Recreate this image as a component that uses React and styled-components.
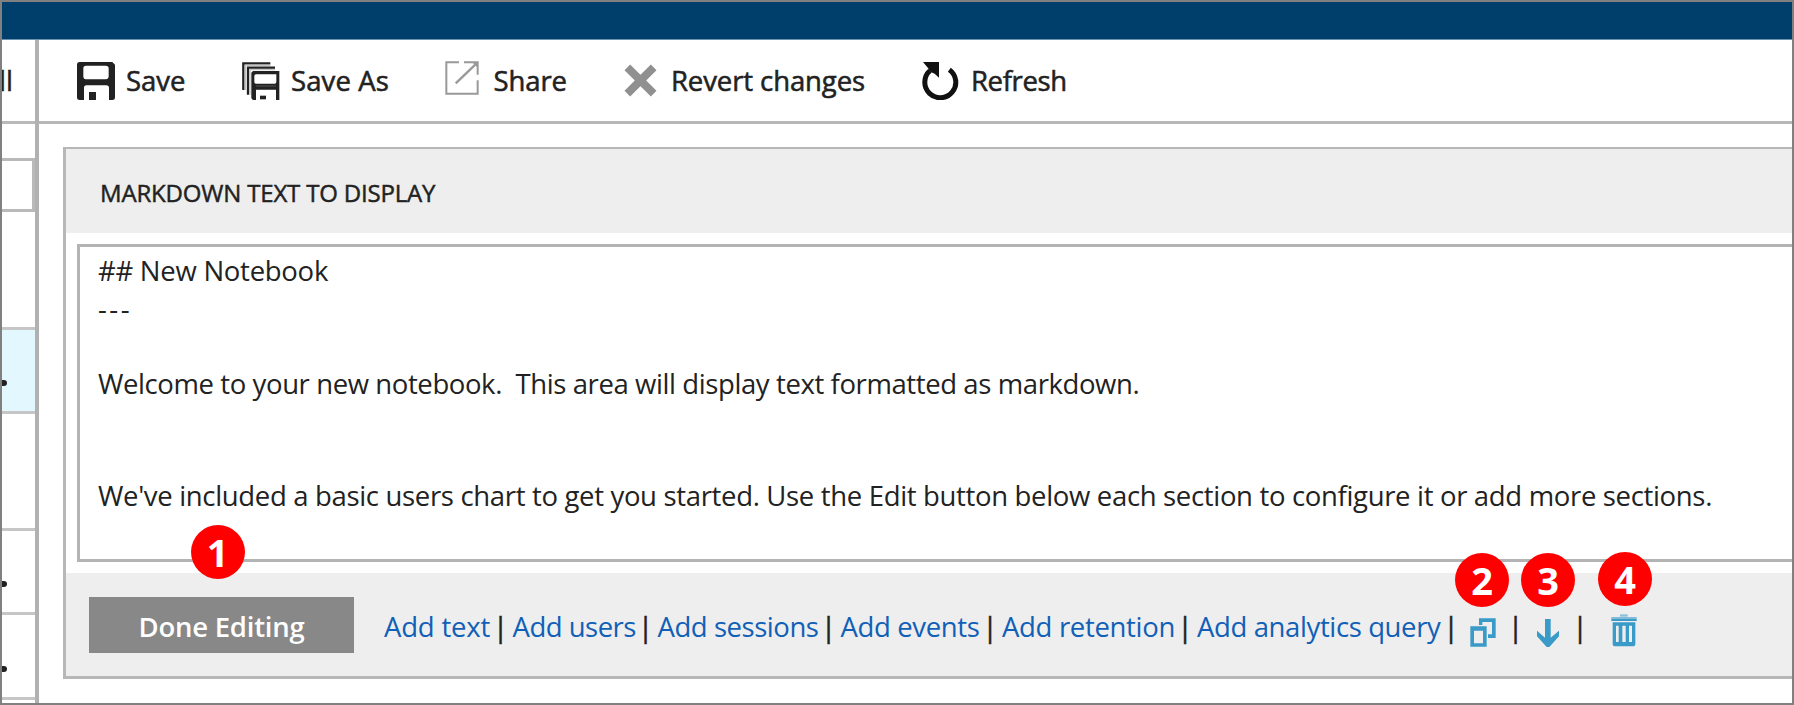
import React from 'react';
import styled, { createGlobalStyle } from 'styled-components';

const GlobalStyle = createGlobalStyle`
  *, *::before, *::after { box-sizing: border-box; }
  body { margin: 0; background: #fff; }
`;

const Frame = styled.div`
  width: 1794px;
  height: 705px;
  border: 2px solid #808080;
  background: #fff;
  color: #222;
  font-family: "Open Sans", "Noto Sans", sans-serif;
  font-size: 27.5px;
  display: flex;
  flex-direction: column;
  overflow: hidden;
  position: relative;
`;

const TopBar = styled.header`
  flex: none;
  height: 38px;
  background: #003e6c;
  border-bottom: 1px solid #6b91af;
`;

const Body = styled.div`
  flex: 1;
  min-height: 0;
  display: flex;
`;

const Rail = styled.aside`
  flex: none;
  width: 37px;
  border-right: 4px solid #b1b1b1;
  display: flex;
  flex-direction: column;
  overflow: hidden;
`;

const RailHead = styled.div`
  flex: none;
  height: 84px;
  border-bottom: 3px solid #b9b9b9;
  padding-top: 21px;
  display: flex;
  justify-content: flex-end;
  padding-right: 22px;
  -webkit-text-stroke: 0.5px currentColor;
  line-height: 40px;
`;

const RailSearch = styled.div`
  flex: none;
  height: 54px;
  margin-top: 34px;
  border: solid #b9b9b9;
  border-width: 3px 3px 3px 0;
`;

const RailRow = styled.div`
  flex: none;
  height: ${(p) => p.$height}px;
  background: ${(p) => (p.$selected ? '#e3f7ff' : '#fff')};
  border-bottom: 3px solid #c6c6c6;
  display: flex;
  align-items: flex-end;
  padding-bottom: 25px;
`;

const Dot = styled.span`
  width: 5px;
  height: 6px;
  border-radius: 0 3px 3px 0;
  background: #222;
`;

const Main = styled.main`
  flex: 1;
  min-width: 0;
  display: flex;
  flex-direction: column;
`;

const Toolbar = styled.nav`
  flex: none;
  height: 84px;
  border-bottom: 3px solid #b7b7b7;
  display: flex;
  align-items: center;
  padding-left: 38px;
`;

const Command = styled.button`
  flex: none;
  width: ${(p) => p.$width}px;
  border: 0;
  padding: 0;
  background: none;
  color: inherit;
  font: inherit;
  -webkit-text-stroke: 0.55px currentColor;
  line-height: 40px;
  letter-spacing: ${(p) => p.$track || 0}px;
  white-space: nowrap;
  display: flex;
  align-items: center;
  gap: ${(p) => p.$gap}px;

  svg { flex: none; display: block; margin-top: ${(p) => p.$shift || 0}px; }
`;

const Panel = styled.section`
  margin: 23px 0 0 24px;
  height: 532px;
  border: solid #b7b7b7;
  border-width: 2px 0 3px 3px;
  display: flex;
  flex-direction: column;
`;

const PanelTitle = styled.h2`
  flex: none;
  margin: 0;
  height: 84px;
  padding: 3px 0 0 34px;
  background: #eee;
  font-size: 24px;
  font-weight: 400;
  -webkit-text-stroke: 0.45px currentColor;
  letter-spacing: -0.18px;
  display: flex;
  align-items: center;
`;

const Editor = styled.div`
  flex: none;
  margin: 11px 0 11px 11px;
  height: 318px;
  border: solid #b4b4b4;
  border-width: 3px 0 3px 3px;
  padding: 5.4px 0 0 18px;
`;

const Line = styled.p`
  margin: 0;
  height: 37.45px;
  line-height: 37.45px;
  letter-spacing: ${(p) => p.$track}px;
  white-space: pre;
`;

const Footer = styled.footer`
  flex: 1;
  background: #eee;
  display: flex;
  align-items: center;
  padding-left: 23px;
`;

const DoneButton = styled.button`
  flex: none;
  width: 265px;
  height: 56px;
  margin-right: 30px;
  padding: 4px 0 0 0;
  border: 0;
  background: #888;
  color: #fff;
  font: inherit;
  font-weight: 600;
  letter-spacing: -0.25px;
  white-space: nowrap;
`;

const AddLink = styled.a`
  flex: none;
  width: ${(p) => p.$width}px;
  padding-top: 4px;
  color: #1160b7;
  letter-spacing: ${(p) => p.$track}px;
  white-space: nowrap;
`;

const Separator = styled.span`
  flex: none;
  width: 24px;
  padding-top: 4px;
  text-align: center;
  -webkit-text-stroke: 0.5px currentColor;
`;

const IconButton = styled.span`
  flex: none;
  width: ${(p) => p.$width}px;
  padding-top: ${(p) => p.$top}px;
  display: flex;
  justify-content: center;
  color: #3a9ac8;

  svg { display: block; }
`;

const Badge = styled.span`
  position: absolute;
  left: ${(p) => p.$x - 29}px;
  top: ${(p) => p.$y - 29}px;
  width: 54px;
  height: 54px;
  border-radius: 50%;
  background: #f00;
  color: #fff;
  font-size: 38px;
  font-weight: 700;
  line-height: 54px;
  text-align: center;
`;

const SaveIcon = () => (
  <svg width="38" height="38" viewBox="0 0 114 114" fill="#222">
    <path
      fillRule="evenodd"
      d="M8 0H106L114 8V106Q114 114 106 114H96V78Q96 70 88 70H28Q21 70 21 78V114H8Q0 114 0 106V8Q0 0 8 0ZM27 11Q19 11 19 19V43Q19 52 27 52H86Q95 52 95 43V19Q95 11 86 11Z"
    />
    <path d="M36 90H57V114H36Z" />
  </svg>
);

const SaveAsIcon = () => (
  <svg width="38" height="38" viewBox="0 0 114 114" fill="#222">
    <path d="M4 84V4H85" fill="none" stroke="#222" strokeWidth="7" />
    <path d="M10 84V10H85" fill="none" stroke="#c4c4c4" strokeWidth="4" />
    <path d="M18 98V17H99" fill="none" stroke="#222" strokeWidth="7" />
    <path d="M24 98V23H99" fill="none" stroke="#c4c4c4" strokeWidth="4" />
    <path
      fillRule="evenodd"
      d="M33 27H112V114H102V83H42V114H33L28 109V32ZM42 37Q37 37 37 42V60Q37 65 42 65H98Q103 65 103 60V37Z"
    />
    <path d="M42 72H102" stroke="#555" strokeWidth="3" />
    <path d="M54 101H72V112H54Z" />
  </svg>
);

const ShareIcon = () => (
  <svg width="34" height="34" viewBox="0 0 102 102" fill="none" stroke="#999" strokeWidth="6">
    <path d="M42 4H4V98H98V58" />
    <path d="M57 4H98V41" />
    <path d="M32 67L94 8" strokeWidth="7" />
    <path d="M82 4H98V20Z" fill="#999" stroke="none" />
  </svg>
);

const RevertIcon = () => (
  <svg width="33" height="33" viewBox="0 0 99 99" fill="none" stroke="#909090" strokeWidth="24">
    <path d="M10 10L89 89M89 10L10 89" />
  </svg>
);

const RefreshIcon = () => (
  <svg width="37" height="38" viewBox="0 0 111 114">
    <path d="M82 23A46.5 46.5 0 1 1 24 26" fill="none" stroke="#111" strokeWidth="15" />
    <path d="M3 0H51V47L38 35L26 30L18 18Z" fill="#111" />
  </svg>
);

const CloneIcon = () => (
  <svg width="26" height="29" viewBox="0 0 78 87" fill="currentColor">
    <path fillRule="evenodd" d="M1 25H50V86H1ZM12 38V76H39V38Z" />
    <path d="M27 1H77V60H54V49H66V12H37V21H27Z" />
  </svg>
);

const MoveDownIcon = () => (
  <svg width="22" height="28" viewBox="0 0 66 84" fill="currentColor">
    <path d="M24 0H41V56L66 35V52L37 84H29L0 52V35L24 56Z" />
  </svg>
);

const TrashIcon = () => (
  <svg width="26" height="33" viewBox="0 0 78 99" fill="currentColor">
    <path d="M27 1H50V8H27Z" opacity=".55" />
    <path d="M1 9H77V14H1Z" opacity=".6" />
    <path d="M1 14H77V21H1Z" />
    <path
      fillRule="evenodd"
      d="M5 25H73V89Q73 97 65 97H13Q5 97 5 89ZM15 35V84H23V35ZM34 35V84H44V35ZM54 35V84H63V35Z"
    />
  </svg>
);

const commands = [
  { label: 'Save', icon: <SaveIcon />, width: 164.5, gap: 11, track: 0 },
  { label: 'Save As', icon: <SaveAsIcon />, width: 203, gap: 11.5, track: 0.1 },
  { label: 'Share', icon: <ShareIcon />, width: 179.5, gap: 15, track: -0.1, shift: -5 },
  { label: 'Revert changes', icon: <RevertIcon />, width: 298, gap: 14, track: -0.1, shift: -1 },
  { label: 'Refresh', icon: <RefreshIcon />, width: 160, gap: 12, track: -0.35 },
];

const links = [
  { label: 'Add text', width: 104.5, track: -0.2 },
  { label: 'Add users', width: 121, track: -0.5 },
  { label: 'Add sessions', width: 159, track: -0.45 },
  { label: 'Add events', width: 137.5, track: -0.35 },
  { label: 'Add retention', width: 171, track: -0.32 },
  { label: 'Add analytics query', width: 242, track: -0.38 },
];

const lines = [
  { text: '## New Notebook', track: -0.27 },
  { text: '---', track: 2.5 },
  { text: '', track: 0 },
  {
    text: 'Welcome to your new notebook.  This area will display text formatted as markdown.',
    track: -0.4,
  },
  { text: '', track: 0 },
  { text: '', track: 0 },
  {
    text: "We've included a basic users chart to get you started. Use the Edit button below each section to configure it or add more sections.",
    track: -0.33,
  },
];

const badges = [
  { n: 1, x: 217.5, y: 552 },
  { n: 2, x: 1482, y: 580 },
  { n: 3, x: 1548, y: 580 },
  { n: 4, x: 1625, y: 579 },
];

export default function App() {
  return (
    <Frame>
      <GlobalStyle />
      <TopBar />
      <Body>
        <Rail>
          <RailHead>All</RailHead>
          <RailSearch />
          <RailRow $height={118} />
          <RailRow $height={84} $selected><Dot /></RailRow>
          <RailRow $height={117} />
          <RailRow $height={84}><Dot /></RailRow>
          <RailRow $height={85}><Dot /></RailRow>
        </Rail>
        <Main>
          <Toolbar>
            {commands.map((c) => (
              <Command key={c.label} $width={c.width} $gap={c.gap} $track={c.track} $shift={c.shift}>
                {c.icon}
                {c.label}
              </Command>
            ))}
          </Toolbar>
          <Panel>
            <PanelTitle>MARKDOWN TEXT TO DISPLAY</PanelTitle>
            <Editor>
              {lines.map((line, i) => (
                <Line key={i} $track={line.track}>{line.text}</Line>
              ))}
            </Editor>
            <Footer>
              <DoneButton>Done Editing</DoneButton>
              {links.map((l) => (
                <React.Fragment key={l.label}>
                  <AddLink $width={l.width} $track={l.track}>{l.label}</AddLink>
                  <Separator>|</Separator>
                </React.Fragment>
              ))}
              <IconButton $width={40.5} $top={16}><CloneIcon /></IconButton>
              <Separator>|</Separator>
              <IconButton $width={40.5} $top={16}><MoveDownIcon /></IconButton>
              <Separator>|</Separator>
              <IconButton $width={64} $top={11}><TrashIcon /></IconButton>
            </Footer>
          </Panel>
        </Main>
      </Body>
      {badges.map((b) => (
        <Badge key={b.n} $x={b.x} $y={b.y}>{b.n}</Badge>
      ))}
    </Frame>
  );
}
